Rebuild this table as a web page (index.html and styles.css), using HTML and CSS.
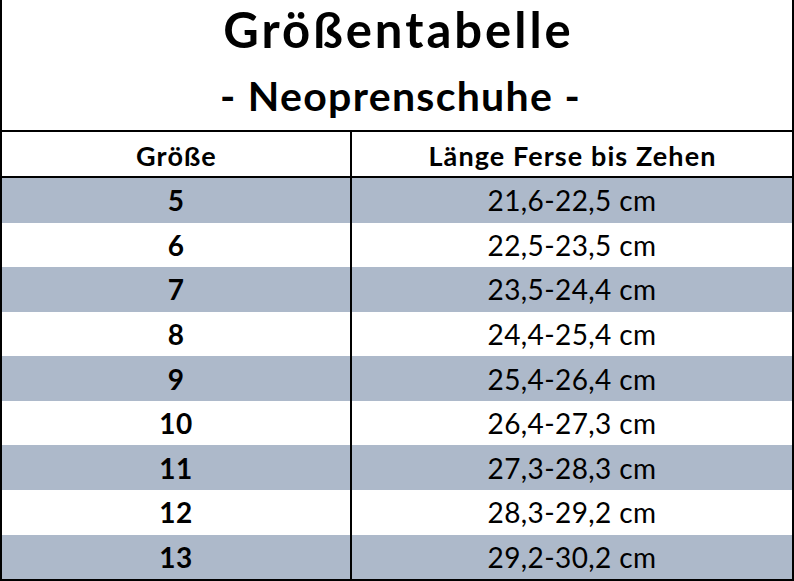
FILE: index.html
```html
<!DOCTYPE html>
<html lang="de">
<head>
<meta charset="utf-8">
<title>Größentabelle</title>
<link rel="stylesheet" href="styles.css">
</head>
<body>
<div class="sheet">
  <div class="title">
    <div class="title-main">Größentabelle</div>
    <div class="title-sub">- Neoprenschuhe -</div>
  </div>
  <div class="head">
    <div class="cell left">Größe</div>
    <div class="cell">Länge Ferse bis Zehen</div>
  </div>
  <div class="rows">
    <div class="row shade"><div class="cell left num">5</div><div class="cell">21,6-22,5 cm</div></div>
    <div class="row"><div class="cell left num">6</div><div class="cell">22,5-23,5 cm</div></div>
    <div class="row shade"><div class="cell left num">7</div><div class="cell">23,5-24,4 cm</div></div>
    <div class="row"><div class="cell left num">8</div><div class="cell">24,4-25,4 cm</div></div>
    <div class="row shade"><div class="cell left num">9</div><div class="cell">25,4-26,4 cm</div></div>
    <div class="row"><div class="cell left num">10</div><div class="cell">26,4-27,3 cm</div></div>
    <div class="row shade"><div class="cell left num">11</div><div class="cell">27,3-28,3 cm</div></div>
    <div class="row"><div class="cell left num">12</div><div class="cell">28,3-29,2 cm</div></div>
    <div class="row shade"><div class="cell left num">13</div><div class="cell">29,2-30,2 cm</div></div>
  </div>
</div>
</body>
</html>
```
FILE: styles.css
```css
html, body {
  margin: 0;
  padding: 0;
  background: #ffffff;
}
body {
  font-family: Lato, "Open Sans", sans-serif;
  color: #000000;
}
.sheet {
  box-sizing: border-box;
  width: 794px;
  height: 581px;
  border-left: 2px solid #000;
  border-right: 2px solid #000;
  border-bottom: 2px solid #000;
  display: flex;
  flex-direction: column;
}
.title {
  box-sizing: border-box;
  height: 132px;
  border-bottom: 2px solid #000;
  padding-top: 1px;
  text-align: center;
  font-weight: 700;
}
.title-main {
  font-size: 49px;
  line-height: 56px;
  letter-spacing: 3px;
  padding-left: 3px;
}
.title-sub {
  font-size: 41px;
  line-height: 47px;
  letter-spacing: 1.3px;
  padding-left: 7px;
  margin-top: 15px;
}
.head {
  box-sizing: border-box;
  height: 46px;
  border-bottom: 2px solid #000;
  display: grid;
  grid-template-columns: 350px 1fr;
  font-weight: 700;
  font-size: 27px;
  letter-spacing: 1.1px;
}
.head .cell {
  padding-top: 3px;
  padding-left: 1px;
}
.rows {
  flex: 1;
  display: flex;
  flex-direction: column;
}
.row {
  flex: 1;
  display: grid;
  grid-template-columns: 350px 1fr;
  font-size: 28px;
  letter-spacing: 0.4px;
}
.row.shade {
  background: #adb9ca;
}
.cell {
  display: flex;
  align-items: center;
  justify-content: center;
  box-sizing: border-box;
}
.cell.left {
  border-right: 2px solid #000;
}
.num {
  font-weight: 700;
}
```
